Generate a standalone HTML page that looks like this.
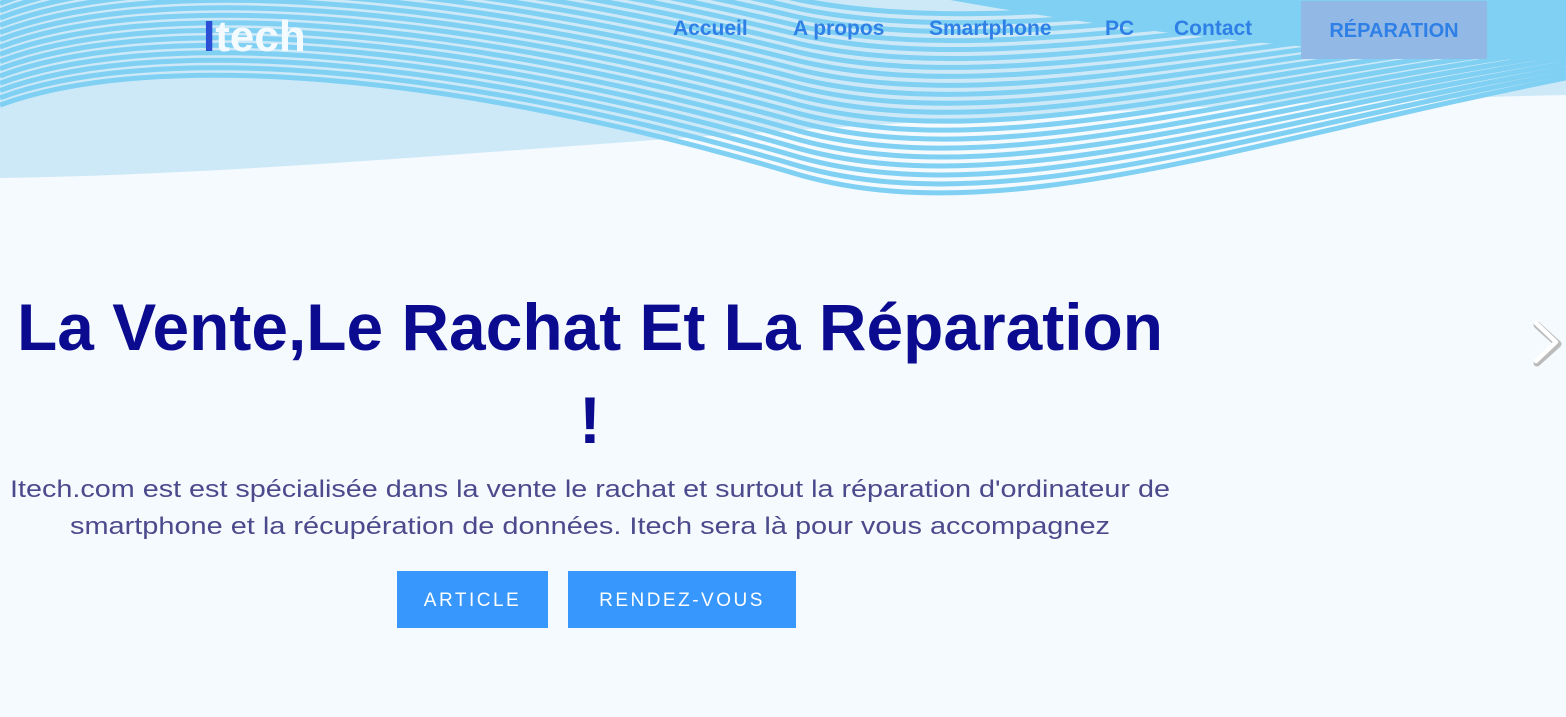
<!DOCTYPE html>
<html><head><meta charset="utf-8">
<style>
html,body{margin:0;padding:0;}
body{width:1566px;height:717px;overflow:hidden;background:#f5fafe;position:relative;font-family:"Liberation Sans",sans-serif;}
svg.bg{position:absolute;left:0;top:0;}
.logo{position:absolute;left:203px;top:12px;font-size:44px;font-weight:bold;color:#f4fbff;letter-spacing:0px;}
.logo span{color:#2c4fd6;}
.nav{position:absolute;top:17px;font-size:21px;font-weight:bold;color:#2f80e6;}
.rep{position:absolute;left:1301px;top:1px;width:186px;height:58px;background:#92b9e6;color:#2f80e6;font-weight:bold;font-size:20px;text-align:center;line-height:60px;}
.btn{position:absolute;top:571px;height:57px;background:#3797fd;color:#fff;font-size:19px;letter-spacing:2.5px;text-align:center;line-height:59px;}
</style></head><body>
<svg class="bg" width="1566" height="717" viewBox="0 0 1566 717">
<path d="M0 0 L0 178 C400 172 800 112 1566 95 L1566 0 Z" fill="#cde9f8"/>
<path d="M950 0 L1566 0 L1566 62 C1400 55 1200 45 950 0Z" fill="#80d0f3"/>
<g id="lines" fill="none" stroke="#80d0f3" stroke-width="5"></g>
<text x="590" y="350" text-anchor="middle" font-family="Liberation Sans" font-weight="bold" font-size="66" fill="#0b0b8f" textLength="1146" lengthAdjust="spacingAndGlyphs">La Vente,Le Rachat Et La Réparation</text>
<text x="590" y="443" text-anchor="middle" font-family="Liberation Sans" font-weight="bold" font-size="66" fill="#0b0b8f">!</text>
<text x="590" y="497" text-anchor="middle" font-family="Liberation Sans" font-size="24" fill="#4b4a8c" textLength="1160" lengthAdjust="spacingAndGlyphs">Itech.com est est spécialisée dans la vente le rachat et surtout la réparation d'ordinateur de</text>
<text x="590" y="534" text-anchor="middle" font-family="Liberation Sans" font-size="24" fill="#4b4a8c" textLength="1040" lengthAdjust="spacingAndGlyphs">smartphone et la récupération de données. Itech sera là pour vous accompagnez</text>
<path d="M1537 325 L1558 344 L1537 363" fill="none" stroke="#bbb" stroke-width="7" stroke-linecap="round" stroke-linejoin="round"/>
<path d="M1536 323 L1556 342 L1536 361" fill="none" stroke="#fff" stroke-width="4.5" stroke-linecap="round" stroke-linejoin="round"/>
</svg>
<script>
(function(){
var top=[[0,-40],[150,-100],[450,-80],[800,0],[1000,40],[1250,-20],[1566,-20]];
var bot=[[0,105],[150,50],[450,70],[800,175],[1000,232],[1250,140],[1566,78]];
var g=document.getElementById('lines'),N=20,s='';
for(var k=0;k<=N;k++){var t=k/N,p=[];
for(var i=0;i<7;i++){p.push([(top[i][0]*(1-t)+bot[i][0]*t).toFixed(1),(top[i][1]*(1-t)+bot[i][1]*t).toFixed(1)]);}
s+='<path d="M'+p[0]+' C'+p[1]+' '+p[2]+' '+p[3]+' C'+p[4]+' '+p[5]+' '+p[6]+'"/>';}
g.innerHTML=s;})();
</script>
<div class="logo"><span>I</span>tech</div>
<div class="nav" style="left:673px">Accueil</div>
<div class="nav" style="left:793px">A propos</div>
<div class="nav" style="left:929px">Smartphone</div>
<div class="nav" style="left:1105px">PC</div>
<div class="nav" style="left:1174px">Contact</div>
<div class="rep">RÉPARATION</div>
<div class="btn" style="left:397px;width:151px">ARTICLE</div>
<div class="btn" style="left:568px;width:228px">RENDEZ-VOUS</div>
</body></html>
